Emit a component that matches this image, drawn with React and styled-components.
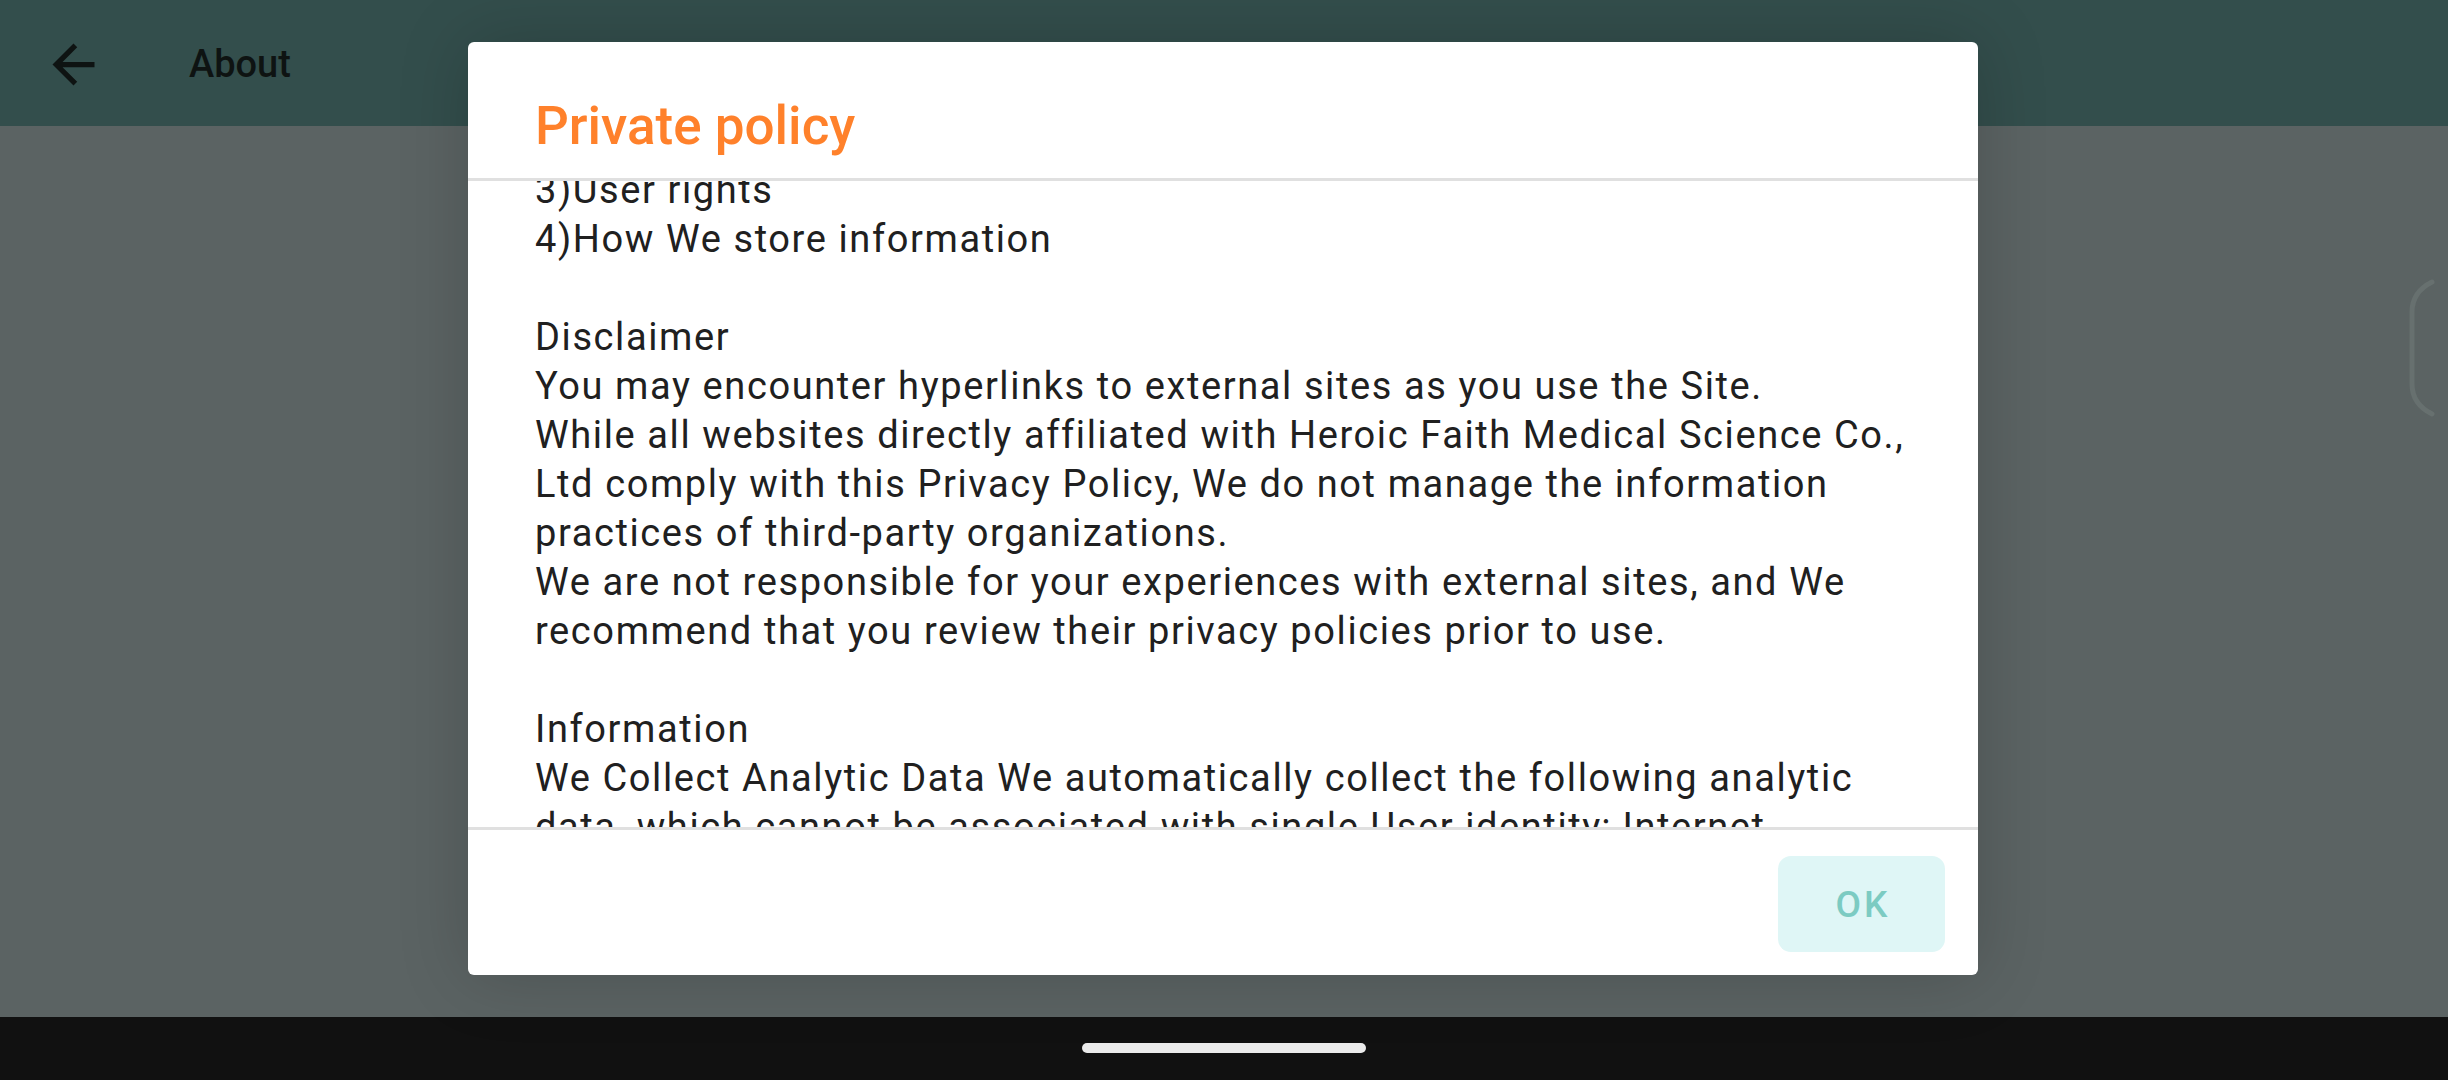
import styled, { createGlobalStyle } from 'styled-components';

const GlobalStyle = createGlobalStyle`
  html, body {
    margin: 0;
    padding: 0;
    width: 2448px;
    height: 1080px;
    overflow: hidden;
    font-family: Roboto, "Noto Sans", "Liberation Sans", sans-serif;
  }
`

const policyText = `3)User rights
4)How We store information

Disclaimer
You may encounter hyperlinks to external sites as you use the Site.
While all websites directly affiliated with Heroic Faith Medical Science Co.,
Ltd comply with this Privacy Policy, We do not manage the information
practices of third-party organizations.
We are not responsible for your experiences with external sites, and We
recommend that you review their privacy policies prior to use.

Information
We Collect Analytic Data We automatically collect the following analytic
data, which cannot be associated with single User identity; Internet
protocol (IP) addresses, browser type, operating system and pages visited.`

const BackIcon = () => (
  <svg width="63" height="63" viewBox="0 0 24 24" fill="#0e1312">
    <path d="M20 11H7.83l5.59-5.59L12 4l-8 8 8 8 1.41-1.41L7.83 13H20v-2z" />
  </svg>
)

const App = () => {
  return (
    <Screen>
      <GlobalStyle />
      <TopBar>
        <BackButton>
          <BackIcon />
        </BackButton>
        <BarTitle>About</BarTitle>
      </TopBar>
      <Content />
      <NavBar>
        <HomePill />
      </NavBar>

      <EdgeHandle width="30" height="140" viewBox="0 0 30 140">
        <path d="M24 4 Q4 14 4 34 L4 106 Q4 126 24 136" />
      </EdgeHandle>

      <Overlay>
        <Dialog>
          <DialogHeader>
            <DialogTitle>Private policy</DialogTitle>
          </DialogHeader>
          <DialogBody>
            <PolicyText>{policyText}</PolicyText>
          </DialogBody>
          <DialogFooter>
            <OkButton>OK</OkButton>
          </DialogFooter>
        </Dialog>
      </Overlay>
    </Screen>
  )
}

const Screen = styled.div`
  position: relative;
  width: 2448px;
  height: 1080px;
  display: flex;
  flex-direction: column;
  background: #5b6363;
`

const TopBar = styled.div`
  height: 126px;
  flex-shrink: 0;
  display: flex;
  align-items: center;
  padding-left: 42px;
  background: #334e4c;
`

const BackButton = styled.div`
  width: 63px;
  height: 63px;
  display: flex;
  align-items: center;
  justify-content: center;
  margin-top: 2px;
`

const BarTitle = styled.div`
  margin-left: 84px;
  font-size: 38px;
  font-weight: 500;
  color: #0e1312;
  margin-top: 2px;
`

const Content = styled.div`
  flex: 1;
  background: #5b6363;
`

const NavBar = styled.div`
  height: 63px;
  flex-shrink: 0;
  background: #111111;
  display: flex;
  justify-content: center;
  padding-top: 26px;
  box-sizing: border-box;
`

const HomePill = styled.div`
  width: 284px;
  height: 10px;
  border-radius: 5px;
  background: #ebebeb;
`

const EdgeHandle = styled.svg`
  position: absolute;
  left: 2408px;
  top: 278px;
  fill: none;
  stroke: #67706f;
  stroke-width: 5;
  stroke-linecap: round;
`

const Overlay = styled.div`
  position: absolute;
  left: 0;
  top: 0;
  width: 100%;
  height: 1017px;
  display: flex;
  align-items: center;
  justify-content: center;
`

const Dialog = styled.div`
  width: 1510px;
  height: 933px;
  margin-left: -2px;
  background: #ffffff;
  border-radius: 6px;
  box-shadow: 0 0 70px rgba(0, 0, 0, 0.18);
  display: flex;
  flex-direction: column;
  overflow: hidden;
`

const DialogHeader = styled.div`
  height: 139px;
  flex-shrink: 0;
  box-sizing: border-box;
  padding: 57px 67px 0;
  border-bottom: 3px solid #e0e0e0;
`

const DialogTitle = styled.div`
  font-size: 53px;
  line-height: 54px;
  font-weight: 500;
  color: #ff812b;
`

const DialogBody = styled.div`
  flex: 1;
  overflow: hidden;
  padding: 0 67px;
`

const PolicyText = styled.div`
  margin-top: -15px;
  white-space: pre;
  font-size: 38px;
  line-height: 49px;
  letter-spacing: 1.6px;
  color: #202020;
`

const DialogFooter = styled.div`
  height: 148px;
  flex-shrink: 0;
  box-sizing: border-box;
  border-top: 3px solid #e0e0e0;
  display: flex;
  justify-content: flex-end;
  padding: 26px 33px 0 0;
`

const OkButton = styled.button`
  width: 167px;
  height: 96px;
  border: none;
  border-radius: 13px;
  background: #dff6f6;
  color: #7ccbc2;
  font-family: Roboto, "Noto Sans", sans-serif;
  font-size: 37px;
  font-weight: 500;
  letter-spacing: 3px;
  padding: 0 0 0 3px;
`

export default App
